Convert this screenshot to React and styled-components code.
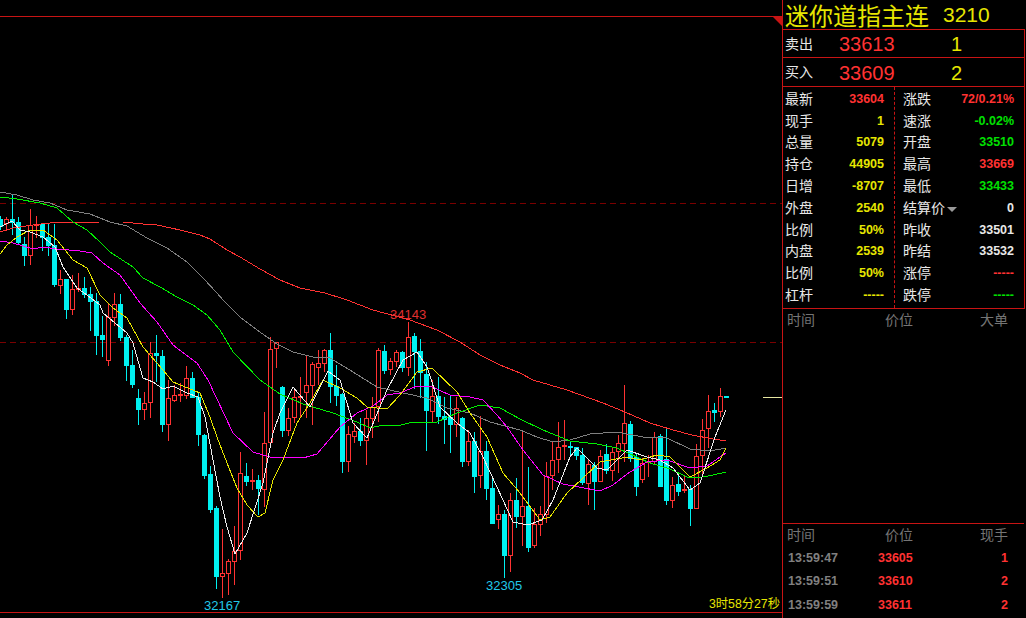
import React from "react";
import styled, { createGlobalStyle } from "styled-components";

const RED = "#c81414";
const UP = "#ff3232";
const YEL = "#e6e600";
const GRN = "#00e000";
const CY = "#00f0f0";

const candles = [
  [216,219,227,230,"c"],[217,219,224,229,"r"],[195,219,223,235,"c"],[217,222,243,244,"c"],[237,244,256,266,"c"],
  [209,225,256,265,"r"],[216,224,226,238,"r"],[223,224,238,251,"c"],[224,237,246,256,"c"],[224,245,285,287,"c"],
  [270,279,286,294,"r"],[279,279,310,319,"c"],[275,289,310,315,"r"],[273,288,290,292,"r"],[277,288,295,298,"c"],
  [287,294,302,331,"c"],[293,301,336,355,"c"],[316,335,340,357,"c"],[303,317,361,366,"r"],[293,304,318,326,"r"],
  [294,304,338,341,"c"],[335,337,366,381,"c"],[350,365,385,388,"c"],[389,398,410,425,"c"],[392,403,410,420,"r"],
  [342,353,403,418,"r"],[335,353,356,382,"c"],[350,356,425,432,"c"],[380,398,425,441,"r"],[385,395,401,402,"r"],
  [383,394,396,402,"r"],[366,378,396,399,"r"],[372,378,398,398,"c"],[393,397,435,446,"c"],[434,435,476,479,"c"],
  [466,474,510,513,"c"],[506,508,577,589,"c"],[529,573,577,598,"r"],[559,561,574,595,"r"],[526,551,562,585,"r"],
  [452,473,551,560,"r"],[463,476,482,486,"c"],[469,480,481,490,"r"],[475,480,489,515,"c"],[412,443,490,507,"r"],
  [337,349,443,445,"r"],[342,342,349,368,"r"],[386,387,431,437,"c"],[408,418,431,436,"r"],[388,397,418,423,"r"],
  [377,396,397,417,"r"],[355,385,393,418,"r"],[362,364,386,425,"r"],[350,363,368,385,"r"],[349,350,364,372,"r"],
  [333,350,387,403,"c"],[365,386,396,406,"c"],[393,394,462,473,"c"],[426,434,462,472,"r"],[423,431,437,443,"r"],
  [418,431,441,446,"c"],[410,418,441,465,"r"],[397,407,419,438,"r"],[348,350,407,422,"r"],[345,351,371,374,"c"],
  [358,361,370,375,"r"],[350,352,362,367,"r"],[351,352,368,372,"c"],[322,337,368,376,"r"],[333,336,352,389,"c"],
  [339,351,373,398,"c"],[362,374,411,451,"c"],[380,396,412,422,"r"],[377,396,417,424,"c"],[397,416,420,444,"c"],
  [396,417,425,453,"c"],[397,408,425,437,"r"],[417,418,462,467,"c"],[430,441,462,466,"r"],[432,441,477,493,"c"],
  [416,451,476,488,"r"],[441,451,489,500,"c"],[476,488,524,524,"c"],[505,514,520,529,"r"],[510,514,556,578,"c"],
  [493,500,556,572,"r"],[478,500,517,528,"c"],[430,506,517,546,"r"],[467,506,548,552,"c"],[508,524,546,548,"r"],
  [506,514,525,536,"r"],[462,476,515,523,"r"],[441,460,476,490,"r"],[422,447,460,473,"r"],[420,445,447,460,"r"],
  [441,446,448,456,"c"],[447,447,456,460,"c"],[448,455,483,485,"c"],[460,464,484,505,"r"],[462,465,482,510,"c"],
  [450,456,482,482,"r"],[444,454,471,474,"c"],[448,452,471,481,"r"],[435,443,452,473,"r"],[385,423,444,462,"r"],
  [421,424,459,462,"c"],[453,457,487,496,"c"],[458,463,480,483,"r"],[455,461,463,477,"r"],[432,437,462,465,"r"],
  [434,436,487,487,"c"],[427,459,501,505,"c"],[477,485,501,508,"r"],[474,484,492,496,"c"],[475,489,490,493,"r"],
  [485,489,509,526,"c"],[444,456,509,509,"r"],[419,430,456,477,"r"],[395,411,429,448,"r"],[403,410,413,422,"c"],
  [388,396,412,417,"r"],[396,396,398,398,"c"],
];

const averages = [
  { color: "#808080", pts: "0,192 17,195 33,200 50,203 67,210 90,214 110,222 127,226 147,238 167,248 187,262 203,278 217,293 223,300 240,317 257,330 277,344 293,352 313,357 330,358 353,372 377,387 403,393 427,398 447,408 470,413 490,422 520,430 537,437 553,442 570,440 590,434 617,432 643,437 667,438 690,449 710,451 726,448" },
  { color: "#ff3232", pts: "0,232 13,228 33,225 50,223 100,222 123,222 143,224 157,225 180,230 200,235 210,239 227,250 240,257 260,269 280,280 300,288 325,293 347,300 373,310 410,320 437,330 460,342 480,355 500,365 520,373 533,380 567,390 603,403 625,412 650,423 673,430 692,435 713,439 726,441" },
  { color: "#00f000", pts: "0,197 17,199 40,203 57,208 73,222 87,230 100,242 110,252 133,267 143,278 160,287 177,297 193,305 207,315 220,330 233,352 260,380 280,394 303,404 333,413 357,422 370,428 383,425 397,426 413,422 437,422 457,413 480,405 500,408 520,419 543,430 570,441 597,444 617,448 650,463 670,469 687,477 697,478 713,475 726,472" },
  { color: "#ff00ff", pts: "0,241 13,243 33,249 43,247 57,249 80,251 92,253 103,263 120,275 140,303 157,322 173,345 197,363 208,380 233,433 253,452 270,457 303,458 317,454 340,427 357,413 373,406 387,395 400,393 417,386 430,386 450,395 470,397 483,400 497,415 507,427 523,450 543,475 563,484 600,491 613,485 627,474 647,462 667,460 690,468 707,466 726,453" },
  { color: "#e6e600", pts: "0,254 7,245 17,237 30,230 43,230 57,240 73,260 87,268 100,295 113,308 127,318 143,347 163,370 173,382 200,393 210,417 217,437 227,463 237,488 247,505 258,517 265,513 273,480 283,460 297,423 310,403 323,380 340,388 357,398 367,407 387,409 400,395 417,372 432,368 457,392 470,413 487,437 503,473 520,493 540,520 550,517 567,493 583,478 600,462 627,457 640,460 657,455 670,457 690,477 707,468 720,460 726,448" },
  { color: "#ececec", pts: "0,227 12,221 20,230 30,232 43,237 55,247 63,267 77,288 87,295 100,305 103,313 127,333 133,343 143,378 153,382 163,389 173,386 187,393 198,397 205,417 213,460 220,497 227,527 235,554 247,533 263,483 273,433 280,413 293,387 310,407 328,371 340,380 353,423 367,438 387,390 403,360 417,352 427,367 440,407 457,423 470,433 483,457 497,487 513,522 528,525 542,520 553,500 570,457 577,448 597,468 607,470 627,450 647,457 660,460 673,468 690,490 700,483 715,437 726,410" },
];

const leftStats = [
  ["最新", "33604", UP], ["现手", "1", YEL], ["总量", "5079", YEL], ["持仓", "44905", YEL], ["日增", "-8707", YEL],
  ["外盘", "2540", YEL], ["比例", "50%", YEL], ["内盘", "2539", YEL], ["比例", "50%", YEL], ["杠杆", "-----", YEL],
];
const rightStats = [
  ["涨跌", "72/0.21%", UP], ["速涨", "-0.02%", GRN], ["开盘", "33510", GRN], ["最高", "33669", UP], ["最低", "33433", GRN],
  ["结算价", "0", "#e8e8e8", true], ["昨收", "33501", "#e8e8e8"], ["昨结", "33532", "#e8e8e8"], ["涨停", "-----", UP], ["跌停", "-----", GRN],
];
const ticks = [
  ["13:59:47", "33605", "1"],
  ["13:59:51", "33610", "2"],
  ["13:59:59", "33611", "2"],
];

const Global = createGlobalStyle`
  html, body { margin: 0; padding: 0; background: #000; height: 100%; overflow: hidden; }
  body { font-family: "Liberation Sans", "Noto Sans CJK SC", sans-serif; }
`;
const Root = styled.div`
  display: flex;
  width: 1026px;
  height: 618px;
  background: #000;
  overflow: hidden;
`;
const ChartPane = styled.div`
  position: relative;
  width: 782px;
  height: 613px;
  flex: none;
  display: flex;
  flex-direction: column;
  border-bottom: 1px solid ${RED};
  box-sizing: border-box;
`;
const ChartTop = styled.div`
  height: 17px;
  flex: none;
  border-bottom: 1px solid ${RED};
  box-sizing: border-box;
`;
const Corner = styled.div`
  position: absolute;
  right: 0;
  top: 16px;
  width: 0;
  height: 0;
  border-top: 10px solid ${RED};
  border-left: 10px solid transparent;
`;
const Plot = styled.svg`
  display: block;
  flex: 1;
  width: 782px;
`;
const ExtremeLabel = styled.div`
  position: absolute;
  left: ${(p) => p.$x}px;
  top: ${(p) => p.$y}px;
  font-size: 13px;
  line-height: 15px;
  color: ${(p) => p.$color};
`;
const Countdown = styled.div`
  position: absolute;
  right: 2px;
  top: 597px;
  font-size: 12.3px;
  line-height: 15px;
  color: ${YEL};
`;
const PriceMark = styled.div`
  position: absolute;
  right: 0;
  top: 397px;
  width: 19px;
  height: 1px;
  background: #e6e6a0;
`;
const Side = styled.aside`
  width: 244px;
  flex: none;
  display: flex;
  flex-direction: column;
  height: 618px;
  border-left: 1px solid ${RED};
  box-sizing: border-box;
`;
const Title = styled.div`
  height: 29px;
  flex: none;
  display: flex;
  align-items: center;
  padding-left: 2px;
  color: ${YEL};
  white-space: nowrap;
`;
const TitleName = styled.span`
  font-size: 24px;
  line-height: 29px;
  font-family: "Noto Sans CJK SC", sans-serif;
`;
const TitleCode = styled.span`
  font-size: 21px;
  line-height: 29px;
  margin-left: 14px;
`;
const Boxed = styled.div`
  border-right: 1px solid ${RED};
  width: 242px;
  box-sizing: border-box;
`;
const QuoteRow = styled(Boxed)`
  height: ${(p) => p.$h}px;
  flex: none;
  display: grid;
  grid-template-columns: 54px 91px 1fr;
  align-items: center;
  padding-left: 2px;
  border-top: 1px solid ${RED};
`;
const Label = styled.span`
  font-size: 14px;
  line-height: 18px;
  margin-top: -2px;
  color: #e8e8e8;
  font-family: "Noto Sans CJK SC", sans-serif;
`;
const QuotePrice = styled.span`
  font-size: 20px;
  line-height: 24px;
  margin-top: 1px;
  color: ${UP};
`;
const QuoteSize = styled(QuotePrice)`
  color: ${YEL};
  padding-left: 21px;
`;
const Stats = styled(Boxed)`
  height: 223px;
  flex: none;
  display: grid;
  grid-template-columns: 111px 1fr;
  border-top: 1px solid ${RED};
  border-bottom: 1px solid ${RED};
`;
const StatColumn = styled.div`
  display: grid;
  grid-auto-rows: 21.8px;
  padding: 1px ${(p) => p.$right}px 0 ${(p) => p.$left}px;
  border-left: ${(p) => (p.$divided ? `1px dashed ${RED}` : "none")};
`;
const StatRow = styled.div`
  display: flex;
  justify-content: space-between;
  align-items: center;
`;
const StatName = styled.span`
  display: flex;
  align-items: center;
`;
const Caret = styled.span`
  width: 0;
  height: 0;
  margin-left: 2px;
  margin-top: 3px;
  border-left: 5px solid transparent;
  border-right: 5px solid transparent;
  border-top: 5px solid #999;
`;
const StatValue = styled.span`
  font-size: 12.5px;
  font-weight: 700;
  color: ${(p) => p.$color};
`;
const ListSection = styled.div`
  flex: ${(p) => (p.$grow ? 1 : "none")};
  width: 241px;
  display: flex;
  flex-direction: column;
`;
const TicksSection = styled(ListSection)`
  border-top: 1px solid ${RED};
  height: 94px;
`;
const HeaderRow = styled.div`
  display: grid;
  grid-template-columns: 98px 1fr auto;
  height: 22px;
  align-items: center;
  padding: 0 16px 0 4px;
`;
const HeaderCell = styled.span`
  font-size: 14px;
  line-height: 18px;
  margin-top: -2px;
  color: #757575;
  font-family: "Noto Sans CJK SC", sans-serif;
`;
const TickRow = styled.div`
  display: grid;
  grid-template-columns: 90px 1fr auto;
  height: 23.5px;
  align-items: center;
  padding: 0 16px 0 5px;
  font-size: 12.5px;
  font-weight: 700;
`;
const TickTime = styled.span`
  color: #808080;
`;
const TickPrice = styled.span`
  color: ${UP};
`;

function Candle({ d, k }) {
  const [high, top, bottom, low, kind] = d;
  const cx = 6 * k + 0.5;
  const color = kind === "r" ? "#ff3232" : CY;
  const hollow = kind === "r";
  return (
    <g>
      <line x1={cx} x2={cx} y1={high} y2={low} stroke={color} />
      {hollow ? (
        <rect x={6 * k - 1.5} y={top + 0.5} width={4} height={Math.max(bottom - top - 1, 1)} fill="#000" stroke={color} />
      ) : (
        <rect x={6 * k - 2} y={top} width={5} height={Math.max(bottom - top, 2)} fill={color} />
      )}
    </g>
  );
}

function StatList({ items, left, right, divided }) {
  return (
    <StatColumn $left={left} $right={right} $divided={divided}>
      {items.map(([name, value, color, caret]) => (
        <StatRow key={name + value}>
          <StatName>
            <Label>{name}</Label>
            {caret && <Caret />}
          </StatName>
          <StatValue $color={color}>{value}</StatValue>
        </StatRow>
      ))}
    </StatColumn>
  );
}

function ListHeader({ last }) {
  return (
    <HeaderRow>
      <HeaderCell>时间</HeaderCell>
      <HeaderCell>价位</HeaderCell>
      <HeaderCell>{last}</HeaderCell>
    </HeaderRow>
  );
}

export default function App() {
  return (
    <Root>
      <Global />
      <ChartPane>
        <ChartTop />
        <Corner />
        <Plot viewBox="0 17 782 595" height="595" shapeRendering="crispEdges">
          <line x1="0" x2="782" y1="203.5" y2="203.5" stroke="#7a0000" strokeDasharray="6 4" />
          <line x1="0" x2="782" y1="342.5" y2="342.5" stroke="#7a0000" strokeDasharray="6 4" />
          {candles.map((d, k) => (
            <Candle key={k} d={d} k={k} />
          ))}
          {averages.map((a) => (
            <polyline key={a.color} points={a.pts} fill="none" stroke={a.color} strokeWidth="1" />
          ))}
        </Plot>
        <ExtremeLabel $x={390} $y={307} $color="#e03030">34143</ExtremeLabel>
        <ExtremeLabel $x={204} $y={598} $color="#20c8e8">32167</ExtremeLabel>
        <ExtremeLabel $x={486} $y={578} $color="#20c8e8">32305</ExtremeLabel>
        <PriceMark />
        <Countdown>3时58分27秒</Countdown>
      </ChartPane>
      <Side>
        <Title>
          <TitleName>迷你道指主连</TitleName>
          <TitleCode>3210</TitleCode>
        </Title>
        <QuoteRow $h={28}>
          <Label>卖出</Label>
          <QuotePrice>33613</QuotePrice>
          <QuoteSize>1</QuoteSize>
        </QuoteRow>
        <QuoteRow $h={29}>
          <Label>买入</Label>
          <QuotePrice>33609</QuotePrice>
          <QuoteSize>2</QuoteSize>
        </QuoteRow>
        <Stats>
          <StatList items={leftStats} left={2} right={10} />
          <StatList items={rightStats} left={8} right={10} divided />
        </Stats>
        <ListSection $grow>
          <ListHeader last="大单" />
        </ListSection>
        <TicksSection>
          <ListHeader last="现手" />
          {ticks.map(([time, price, size]) => (
            <TickRow key={time}>
              <TickTime>{time}</TickTime>
              <TickPrice>{price}</TickPrice>
              <TickPrice>{size}</TickPrice>
            </TickRow>
          ))}
        </TicksSection>
      </Side>
    </Root>
  );
}
